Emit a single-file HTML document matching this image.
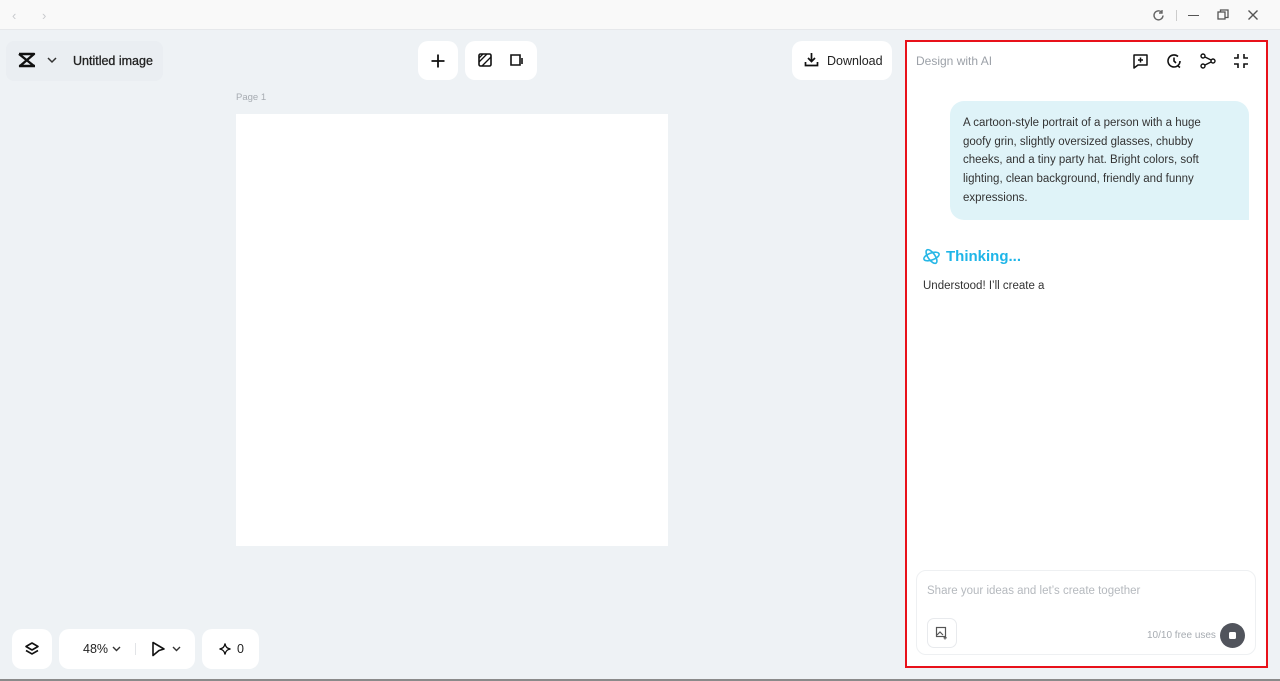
<!DOCTYPE html>
<html><head><style>
*{box-sizing:border-box;margin:0;padding:0}
body{width:1280px;height:681px;overflow:hidden;background:#eef2f5;font-family:"Liberation Sans",sans-serif;position:relative;color:#1f2329}
.abs{position:absolute}
.card{position:absolute;background:#fff;border-radius:10px}
svg{display:block}
</style></head><body>
<div class="abs" style="left:0;top:0;width:1280px;height:30px;background:#f9f9f9;border-bottom:1px solid #e6e8eb"></div>
<div class="abs" style="left:12px;top:8px;color:#c8cacd;font-size:13px">‹</div>
<div class="abs" style="left:42px;top:8px;color:#c8cacd;font-size:13px">›</div>
<svg class="abs" style="left:1152px;top:9px" width="13" height="13" viewBox="0 0 13 13"><path d="M11 6.5A4.5 4.5 0 1 1 9.5 3M10 1v3H7" fill="none" stroke="#666" stroke-width="1.4"/></svg>
<div class="abs" style="left:1176px;top:10px;width:1px;height:11px;background:#ccc"></div>
<div class="abs" style="left:1188px;top:15px;width:11px;height:1.4px;background:#555"></div>
<svg class="abs" style="left:1217px;top:9px" width="12" height="12"><rect x="1" y="3" width="7" height="7" fill="none" stroke="#555" stroke-width="1.3"/><path d="M3.5 3V1H11V8.5H8" fill="none" stroke="#555" stroke-width="1.3"/></svg>
<svg class="abs" style="left:1247px;top:9px" width="12" height="12"><path d="M1.5 1.5L10.5 10.5M10.5 1.5L1.5 10.5" stroke="#555" stroke-width="1.4"/></svg>

<div class="abs" style="left:6px;top:41px;width:157px;height:40px;background:#eaeef2;border-radius:8px"></div>
<svg class="abs" style="left:18px;top:52px" width="18" height="16" viewBox="0 0 18 16"><path d="M1 2h15L2 14h15M1 14h15M1 2l15 12" fill="none" stroke="#111" stroke-width="2.4" stroke-linejoin="round"/></svg>
<svg class="abs" style="left:47px;top:57px" width="10" height="7"><path d="M1 1l4 4 4-4" fill="none" stroke="#333" stroke-width="1.5"/></svg>
<div class="abs" style="left:73px;top:54px;font-size:12.5px;color:#222;-webkit-text-stroke:0.3px #222">Untitled image</div>

<div class="card" style="left:418px;top:41px;width:40px;height:39px"></div>
<svg class="abs" style="left:430px;top:53px" width="16" height="16"><path d="M8 1.5v13M1.5 8h13" stroke="#111" stroke-width="1.8"/></svg>
<div class="card" style="left:465px;top:41px;width:72px;height:39px"></div>
<svg class="abs" style="left:478px;top:53px" width="14" height="14"><rect x="1" y="1" width="12" height="12" rx="1.5" fill="none" stroke="#111" stroke-width="1.6"/><path d="M1 9L9 1M4 13L13 4M1 5L5 1" stroke="#111" stroke-width="1.3"/></svg>
<svg class="abs" style="left:508px;top:52px" width="16" height="16"><path d="M3 3h9v10H3z" fill="none" stroke="#111" stroke-width="1.6"/><path d="M14 6v6" stroke="#111" stroke-width="1.6"/></svg>

<div class="card" style="left:792px;top:41px;width:100px;height:39px"></div>
<svg class="abs" style="left:804px;top:52px" width="15" height="15"><path d="M7.5 1v8M4 6l3.5 3.5L11 6M1.5 10v3.5h12V10" fill="none" stroke="#111" stroke-width="1.7"/></svg>
<div class="abs" style="left:827px;top:54px;font-size:12.5px;color:#222">Download</div>

<div class="abs" style="left:236px;top:92px;font-size:9.5px;color:#a7acb2">Page 1</div>
<div class="abs" style="left:236px;top:114px;width:432px;height:432px;background:#fff"></div>

<div class="card" style="left:12px;top:629px;width:40px;height:40px"></div>
<svg class="abs" style="left:24px;top:641px" width="16" height="16"><path d="M8 2l6 3.5L8 9 2 5.5z" fill="none" stroke="#111" stroke-width="1.6" stroke-linejoin="round"/><path d="M2 9.5L8 13l6-3.5" fill="none" stroke="#111" stroke-width="1.6"/></svg>
<div class="card" style="left:59px;top:629px;width:136px;height:40px"></div>
<div class="abs" style="left:83px;top:642px;font-size:12.5px;color:#222">48%</div>
<svg class="abs" style="left:112px;top:646px" width="9" height="6"><path d="M1 1l3.5 3.5L8 1" fill="none" stroke="#333" stroke-width="1.4"/></svg>
<div class="abs" style="left:135px;top:643px;width:1px;height:12px;background:#e2e4e7"></div>
<svg class="abs" style="left:151px;top:641px" width="15" height="16"><path d="M2 1.5l11 6.5-5 1.5-6 5z" fill="none" stroke="#111" stroke-width="1.6" stroke-linejoin="round"/></svg>
<svg class="abs" style="left:172px;top:646px" width="9" height="6"><path d="M1 1l3.5 3.5L8 1" fill="none" stroke="#333" stroke-width="1.4"/></svg>
<div class="card" style="left:202px;top:629px;width:57px;height:40px"></div>
<svg class="abs" style="left:219px;top:643px" width="12" height="12"><path d="M6 0.5Q6.6 5.4 11.5 6 6.6 6.6 6 11.5 5.4 6.6 0.5 6 5.4 5.4 6 0.5z" fill="none" stroke="#111" stroke-width="1.3"/></svg>
<div class="abs" style="left:237px;top:642px;font-size:12.5px;color:#222">0</div>

<div class="abs" style="left:905px;top:40px;width:363px;height:628px;background:#fff;border:2px solid #e8111a"></div>
<div class="abs" style="left:916px;top:54px;font-size:12px;color:#9ca1a8">Design with AI</div>
<svg class="abs" style="left:1132px;top:53px" width="17" height="16"><path d="M2 2h13v10H6l-4 3z" fill="none" stroke="#111" stroke-width="1.5" stroke-linejoin="round"/><path d="M8.5 4.5v5M6 7h5" stroke="#111" stroke-width="1.5"/></svg>
<svg class="abs" style="left:1166px;top:53px" width="16" height="16"><path d="M14 8A6 6 0 1 1 12 3.5" fill="none" stroke="#111" stroke-width="1.6"/><path d="M8 4.5V8l2 2M12 13l2 1.5" fill="none" stroke="#111" stroke-width="1.6"/></svg>
<svg class="abs" style="left:1200px;top:53px" width="16" height="16"><circle cx="3" cy="3" r="2" fill="none" stroke="#111" stroke-width="1.4"/><circle cx="3" cy="13" r="2" fill="none" stroke="#111" stroke-width="1.4"/><circle cx="13" cy="8" r="2" fill="none" stroke="#111" stroke-width="1.4"/><path d="M5 4l6 3M5 12l6-3" stroke="#111" stroke-width="1.4"/></svg>
<svg class="abs" style="left:1233px;top:53px" width="16" height="16"><path d="M5 1v4H1M11 1v4h4M5 15v-4H1M11 15v-4h4" fill="none" stroke="#111" stroke-width="1.6"/></svg>

<div class="abs" style="left:950px;top:101px;width:299px;height:119px;background:#dff3f8;border-radius:14px 14px 0 14px"></div>
<div class="abs" style="left:963px;top:114px;width:262px;font-size:11.5px;line-height:18.7px;color:#333">A cartoon-style portrait of a person with a huge goofy grin, slightly oversized glasses, chubby cheeks, and a tiny party hat. Bright colors, soft lighting, clean background, friendly and funny expressions.</div>

<svg class="abs" style="left:922px;top:247px" width="19" height="19" viewBox="0 0 19 19"><ellipse cx="9.5" cy="9.5" rx="8" ry="3.5" transform="rotate(55 9.5 9.5)" fill="none" stroke="#27b7e6" stroke-width="1.6"/><ellipse cx="9.5" cy="9.5" rx="8" ry="3.5" transform="rotate(-20 9.5 9.5)" fill="none" stroke="#27b7e6" stroke-width="1.6"/></svg>
<div class="abs" style="left:946px;top:248px;font-size:15px;font-weight:bold;color:#1eb5e8">Thinking...</div>
<div class="abs" style="left:923px;top:280px;font-size:11.5px;color:#333">Understood! I’ll create a</div>

<div class="abs" style="left:916px;top:570px;width:340px;height:85px;border:1px solid #eef0f2;border-radius:10px;background:#fff"></div>
<div class="abs" style="left:927px;top:585px;font-size:11.5px;color:#b5b9be">Share your ideas and let’s create together</div>
<div class="abs" style="left:927px;top:618px;width:30px;height:30px;border:1px solid #e8eaed;border-radius:7px"></div>
<svg class="abs" style="left:935px;top:626px" width="14" height="14"><rect x="1.5" y="1.5" width="9" height="9" fill="none" stroke="#555" stroke-width="1.2"/><path d="M2 9l3-3 3 3M10 10v3.5M8.5 11.8h3.3" fill="none" stroke="#555" stroke-width="1.2"/></svg>
<div class="abs" style="left:1147px;top:630px;font-size:10px;color:#a6abb1">10/10 free uses</div>
<div class="abs" style="left:1220px;top:623px;width:25px;height:25px;border-radius:50%;background:#51545c"></div>
<div class="abs" style="left:1229px;top:632px;width:7px;height:7px;background:#fff;border-radius:1.5px"></div>
<div class="abs" style="left:0;top:679px;width:1280px;height:2px;background:#8a8a8a"></div>
</body></html>
